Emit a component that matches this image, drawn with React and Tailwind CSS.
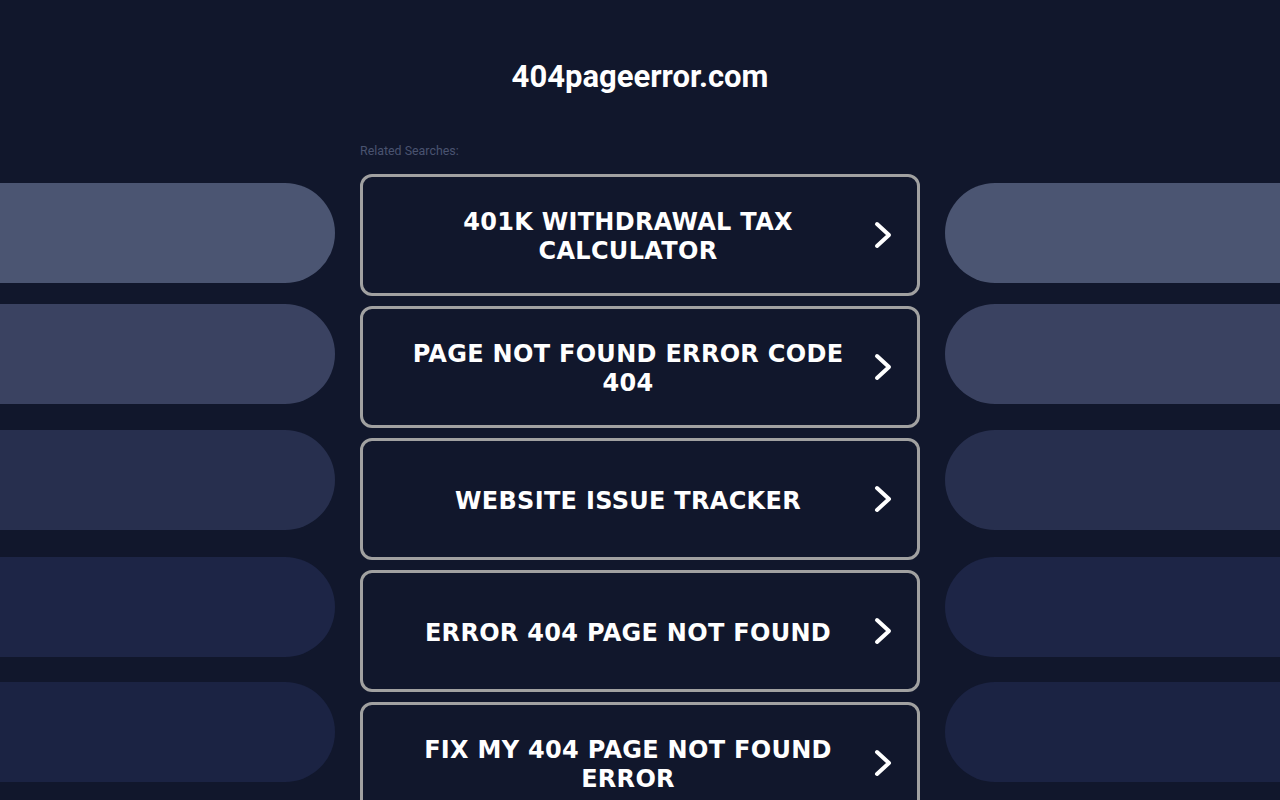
import { Fragment } from "react";

const searches = [
  "401K WITHDRAWAL TAX CALCULATOR",
  "PAGE NOT FOUND ERROR CODE 404",
  "WEBSITE ISSUE TRACKER",
  "ERROR 404 PAGE NOT FOUND",
  "FIX MY 404 PAGE NOT FOUND ERROR",
];

// decorative side pills, top offset + colour
const pills = [
  { mt: "mt-[183px]", bg: "bg-[#4b5572]" },
  { mt: "mt-[21px]", bg: "bg-[#3a4261]" },
  { mt: "mt-[26px]", bg: "bg-[#272f4e]" },
  { mt: "mt-[27px]", bg: "bg-[#1d2546]" },
  { mt: "mt-[25px]", bg: "bg-[#1b2343]" },
];

function Chevron() {
  return (
    <svg width="20" height="30" viewBox="0 0 20 30" fill="none" className="shrink-0">
      <polyline
        points="4,4 16,15 4,26"
        stroke="white"
        strokeWidth="4"
        strokeLinecap="round"
        strokeLinejoin="round"
      />
    </svg>
  );
}

function SideColumn({ side }) {
  const round = side === "left" ? "rounded-r-full" : "rounded-l-full";
  return (
    <div className="flex flex-col">
      {pills.map((p, i) => (
        <div key={i} className={`${p.mt} ${p.bg} ${round} h-[100px] w-full`} />
      ))}
    </div>
  );
}

export default function App() {
  return (
    <div className="h-[800px] w-full overflow-hidden bg-[#11172c]">
      <div className="grid grid-cols-[335px_560px_335px] gap-x-[25px]">
        <SideColumn side="left" />

        <div className="flex flex-col">
          <h1
            className="pt-[56px] text-center text-[31px] font-bold leading-[42px] text-white"
            style={{ fontFamily: "Roboto, 'Liberation Sans', sans-serif" }}
          >
            404pageerror.com
          </h1>
          <p
            className="mt-[45px] text-[12.4px] leading-[16px] text-[#4a5370]"
            style={{ fontFamily: "Roboto, 'Liberation Sans', sans-serif" }}
          >
            Related Searches:
          </p>
          <div className="mt-[15px] flex flex-col gap-[10px]">
            {searches.map((s) => (
              <Fragment key={s}>
                <a
                  href="#"
                  className="flex h-[122px] items-center rounded-[12px] border-[3px] border-[#a1a1a1] pl-[40px] pr-[24px]"
                >
                  <span
                    className="flex-1 pr-[20px] pt-[4px] text-center text-[24px] font-bold leading-[29px] tracking-[0.3px] text-white"
                    style={{ fontFamily: "'DejaVu Sans', Verdana, sans-serif" }}
                  >
                    {s}
                  </span>
                  <Chevron />
                </a>
              </Fragment>
            ))}
          </div>
        </div>

        <SideColumn side="right" />
      </div>
    </div>
  );
}
